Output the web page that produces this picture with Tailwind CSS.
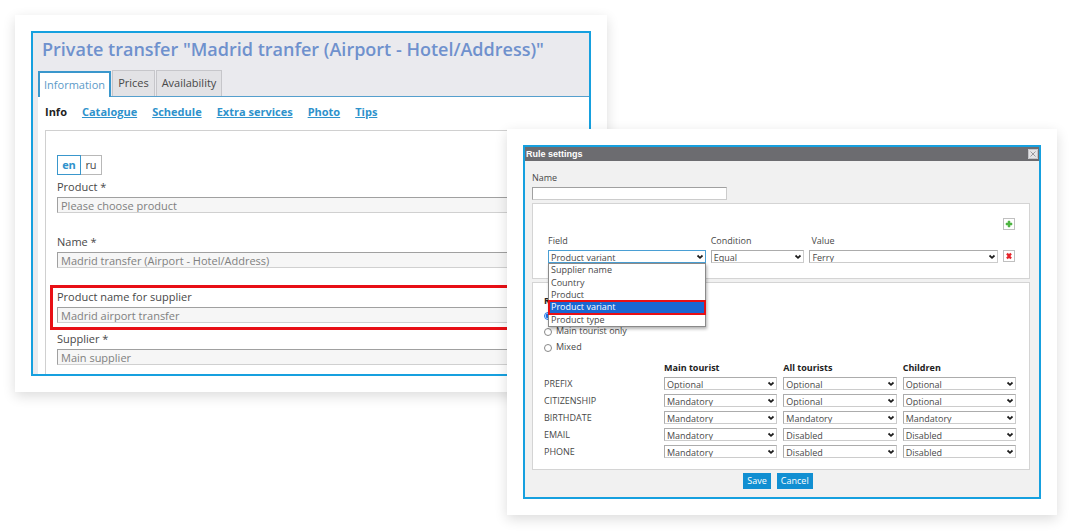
<!DOCTYPE html>
<html lang="en">
<head>
<meta charset="utf-8">
<meta name="viewport" content="width=device-width, initial-scale=1">
<title>Private transfer</title>
<script src="https://cdn.jsdelivr.net/npm/@tailwindcss/browser@4"></script>
</head>
<body class="bg-white font-['Open_Sans',sans-serif] text-[#484848]">
<svg class="hidden"><symbol id="chev" viewBox="0 0 8 6"><path d="M1.500 1.500 4 3.800 6.500 1.500" fill="none" stroke="#1c1c1c" stroke-width="1.700"/></symbol></svg>
<main class="grid grid-cols-[minmax(0,492fr)_minmax(0,100fr)_minmax(0,450fr)] items-start pt-[15px] pr-4 pb-4 pl-[15px]">

  <!-- Product form -->
  <section class="col-start-1 col-span-2 row-start-1 bg-white p-4 shadow-[0_4px_12px_rgba(0,0,0,0.14)]">
    <div class="overflow-hidden border-2 border-[#16a0df] bg-[#eaeaee] pl-[5px]">
      <h1 class="pt-1 pl-1 text-[18px] leading-6 font-semibold whitespace-nowrap text-[#6f91cd]">Private transfer "Madrid tranfer (Airport - Hotel/Address)"</h1>
      <div role="tablist" class="mt-2 flex h-[28px] items-end border-b border-[#559fcd] text-[11px]">
        <button role="tab" aria-selected="true" class="-mb-px h-[26px] w-[73px] border-2 border-b-0 border-[#3a97cc] bg-white text-[#5b9ac8]">Information</button>
        <button role="tab" class="ml-px h-[26px] w-[43px] border border-b-0 border-[#c6c6ca] bg-[#e2e2e5]">Prices</button>
        <button role="tab" class="ml-px h-[26px] w-[66px] border border-b-0 border-[#c6c6ca] bg-[#e2e2e5]">Availability</button>
      </div>
      <div class="bg-white pl-[7px]">
        <nav class="flex h-[33px] items-center gap-[15px] pb-[2px] text-[11px] font-bold text-[#2e92cc]">
          <span class="text-[#222]">Info</span>
          <a href="#" class="underline">Catalogue</a>
          <a href="#" class="underline">Schedule</a>
          <a href="#" class="underline">Extra services</a>
          <a href="#" class="underline">Photo</a>
          <a href="#" class="underline">Tips</a>
        </nav>
        <form class="border-t border-l border-[#d0d0d0] pt-6 pb-[9px] pl-[11px] text-[11px] leading-4">
          <div class="flex h-5">
            <button type="button" class="w-6 border border-[#3a97cc] font-bold text-[#2e92cc]">en</button>
            <button type="button" class="w-[21px] border border-l-0 border-[#b8b8b8]">ru</button>
          </div>
          <div class="mt-1 h-[55px]">
            <label for="product" class="block">Product *</label>
            <input id="product" value="Please choose product" class="mt-[2px] block h-4 w-full border border-[#d0d0d0] border-t-[#a0a0a0] border-l-[#a0a0a0] bg-[#f6f6f6] pt-[2px] pl-[3px] text-[#808080]">
          </div>
          <div class="h-[51px]">
            <label for="name" class="block">Name *</label>
            <input id="name" value="Madrid transfer (Airport - Hotel/Address)" class="mt-[2px] block h-4 w-full border border-[#d0d0d0] border-t-[#a0a0a0] border-l-[#a0a0a0] bg-[#f6f6f6] pt-[2px] pl-[3px] text-[#808080]">
          </div>
          <div class="-ml-[7px] h-[45px] border-[3px] border-[#e80f15] pt-px pl-1">
            <label for="supname" class="block">Product name for supplier</label>
            <input id="supname" value="Madrid airport transfer" class="mt-[2px] block h-4 w-full border border-[#d0d0d0] border-t-[#a0a0a0] border-l-[#a0a0a0] bg-[#f6f6f6] pt-[2px] pl-[3px] text-[#808080]">
          </div>
          <div class="mt-[1px]">
            <label for="supplier" class="block">Supplier *</label>
            <input id="supplier" value="Main supplier" class="mt-[2px] block h-4 w-full border border-[#d0d0d0] border-t-[#a0a0a0] border-l-[#a0a0a0] bg-[#f6f6f6] pt-[2px] pl-[3px] text-[#808080]">
          </div>
        </form>
      </div>
    </div>
  </section>

  <!-- Rule settings dialog -->
  <section class="col-start-2 col-span-2 row-start-1 mt-[114px] bg-white p-4 shadow-[0_4px_12px_rgba(0,0,0,0.14)]">
    <div class="border-2 border-[#16a0df] bg-[#f1f1f1] text-[9px] leading-3">
      <div class="flex h-[14px] items-center justify-between bg-[#6c6c70] pr-px pl-px font-bold text-white">
        <h2 class="font-['Liberation_Sans',sans-serif]">Rule settings</h2>
        <button aria-label="Close" class="bg-[#e4e4e6]"><svg class="size-[10px]" viewBox="0 0 10 10" fill="none" stroke="#9a9a9f"><path d="M.5.5h9v9h-9z" stroke="#c4c4c8"/><path d="m2.500 2.500 5 5m0-5-5 5"/></svg></button>
      </div>
      <form class="pr-[9px] pb-2 pl-[7px]">
        <label for="rname" class="block pt-[11px]">Name</label>
        <input id="rname" class="mt-[3px] block h-[13px] w-[195px] border border-[#ccc] border-t-[#a0a0a0] border-l-[#a0a0a0] bg-white">
        <div class="mt-[3px] h-[76px] border border-[#d4d4d4] bg-white pr-[14px] pl-[15px]">
          <div class="flex justify-end pt-[14px]">
            <button type="button" aria-label="Add" class="border border-[#c0c0c0]"><svg class="size-[10px]" viewBox="0 0 10 10"><path d="M4 2h2v2h2v2H6v2H4V6H2V4h2z" fill="#4fb443" stroke="#4fb443" stroke-width=".5"/></svg></button>
          </div>
          <div class="mt-[5px] grid grid-cols-[158fr_94fr_189fr_12px] gap-x-[5px]">
            <label for="field">Field</label><label for="cond">Condition</label><label for="val" class="col-span-2 pl-[2px]">Value</label>
            <div class="relative mt-[3px] grid items-center">
              <select id="field" class="col-start-1 row-start-1 h-[13px] w-full appearance-none border border-[#4a9fd4] pt-px pl-[2px] leading-3"><option>Product variant</option></select>
              <svg class="pointer-events-none col-start-1 row-start-1 mr-[2px] h-[6px] w-2 justify-self-end"><use href="#chev"/></svg>
              <ul role="listbox" aria-label="Field" class="absolute top-[13px] left-0 z-10 flex h-[64px] w-full flex-col border border-[#8a8a8a] bg-white shadow-[1px_2px_3px_rgba(0,0,0,0.3)]">
                <li role="option" class="flex flex-1 items-center pl-[2px]">Supplier name</li>
                <li role="option" class="flex flex-1 items-center pl-[2px]">Country</li>
                <li role="option" class="flex flex-1 items-center pl-[2px]">Product</li>
                <li role="option" aria-selected="true" class="flex flex-1 items-center bg-[#1a67d2] pl-[2px] text-white outline-2 -outline-offset-1 outline-[#e80f15]">Product variant</li>
                <li role="option" class="flex flex-1 items-center pl-[2px]">Product type</li>
              </ul>
            </div>
            <div class="mt-[3px] grid items-center">
              <select id="cond" class="col-start-1 row-start-1 h-[13px] w-full appearance-none border border-[#ccc] border-t-[#acacac] border-l-[#acacac] pt-px pl-[2px] leading-3"><option>Equal</option></select>
              <svg class="pointer-events-none col-start-1 row-start-1 mr-[2px] h-[6px] w-2 justify-self-end"><use href="#chev"/></svg>
            </div>
            <div class="mt-[3px] grid items-center">
              <select id="val" class="col-start-1 row-start-1 h-[13px] w-full appearance-none border border-[#ccc] border-t-[#acacac] border-l-[#acacac] pt-px pl-[2px] leading-3"><option>Ferry</option></select>
              <svg class="pointer-events-none col-start-1 row-start-1 mr-[2px] h-[6px] w-2 justify-self-end"><use href="#chev"/></svg>
            </div>
            <button type="button" aria-label="Remove" class="mt-[3px] self-start border border-[#c0c0c0]"><svg class="size-[10px]" viewBox="0 0 10 10"><path d="m3 2.500 4 5m0-5-4 5" stroke="#e5232a" stroke-width="2.200"/></svg></button>
          </div>
        </div>
        <div class="mt-[3px] border border-[#d4d4d4] bg-white pt-3 pr-[13px] pb-[9px] pl-[11px]">
          <fieldset>
            <legend class="font-bold text-[#222]">R</legend>
            <div class="flex h-4 items-center"><input type="radio" name="who" aria-label="All" checked class="mt-px size-2 accent-[#1a73e8]"></div>
            <label class="flex h-4 items-center gap-[4px]"><input type="radio" name="who" class="mt-[2px] size-2 appearance-none rounded-full border border-[#888]">Main tourist only</label>
            <label class="flex h-4 items-center gap-[4px]"><input type="radio" name="who" class="mt-[2px] size-2 appearance-none rounded-full border border-[#888]">Mixed</label>
          </fieldset>
          <table class="mt-[5px] w-[calc(100%+6px)] table-fixed text-left">
            <colgroup><col class="w-[120px]"><col><col><col></colgroup>
            <thead><tr class="h-[15px] text-[#222]"><td></td><th class="p-0">Main tourist</th><th class="p-0">All tourists</th><th class="p-0">Children</th></tr></thead>
            <tbody id="rows"></tbody>
          </table>
        </div>
        <div class="mt-[3px] flex justify-center gap-[6px] pr-[6px] text-white">
          <button type="button" class="h-4 bg-[#118fd2] px-1">Save</button>
          <button type="button" class="h-4 bg-[#118fd2] px-1">Cancel</button>
        </div>
      </form>
    </div>
  </section>
</main>
<script>
const groups = ['Main tourist', 'All tourists', 'Children'];
const data = [
  ['PREFIX', 'Optional', 'Optional', 'Optional'],
  ['CITIZENSHIP', 'Mandatory', 'Optional', 'Optional'],
  ['BIRTHDATE', 'Mandatory', 'Mandatory', 'Mandatory'],
  ['EMAIL', 'Mandatory', 'Disabled', 'Disabled'],
  ['PHONE', 'Mandatory', 'Disabled', 'Disabled'],
];
document.getElementById('rows').innerHTML = data.map(([name, ...vals]) =>
  `<tr class="h-[17px]"><th scope="row" class="p-0 font-normal">${name}</th>${vals.map((v, i) =>
    `<td class="p-0 pr-[6px]"><div class="grid items-center">
      <select aria-label="${name}, ${groups[i]}" class="col-start-1 row-start-1 h-[13px] w-full appearance-none border border-[#ccc] border-t-[#acacac] border-l-[#acacac] pt-px pl-[2px] leading-3">${['Optional', 'Mandatory', 'Disabled'].map(o => `<option${o === v ? ' selected' : ''}>${o}</option>`).join('')}</select>
      <svg class="pointer-events-none col-start-1 row-start-1 mr-[2px] h-[6px] w-2 justify-self-end"><use href="#chev"/></svg>
    </div></td>`).join('')}</tr>`).join('');
</script>
</body>
</html>
